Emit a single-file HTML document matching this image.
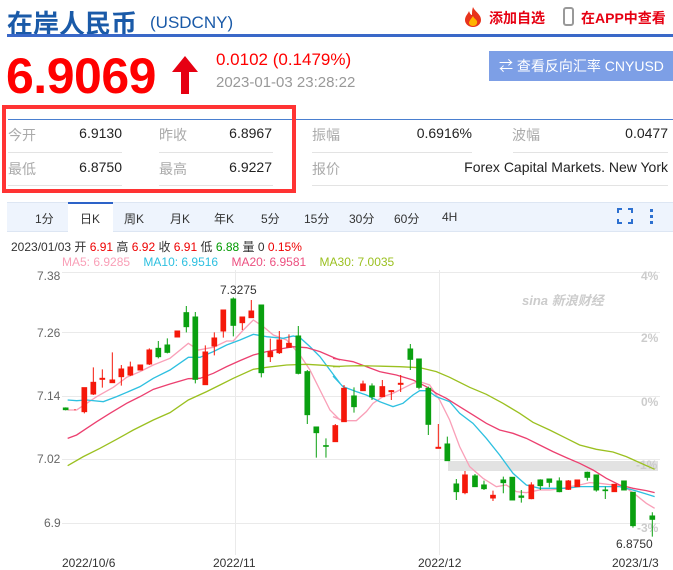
<!DOCTYPE html>
<html><head><meta charset="utf-8"><style>
*{margin:0;padding:0;box-sizing:border-box}
body{width:673px;height:570px;background:#fff;position:relative;overflow:hidden;font-family:"Liberation Sans","Noto Sans CJK SC",sans-serif}
.a{position:absolute;white-space:nowrap}
.lab{color:#aaa;font-size:14px}
.val{color:#222;font-size:14px;text-align:right}
.ln{position:absolute;height:1px;background:#e3e3e3}
.tab{position:absolute;top:210px;font-size:12px;color:#333}
</style></head><body>
<div class="a" style="left:7px;top:6px;font-size:26px;font-weight:bold;color:#1a5aa8;font-family:'Noto Sans CJK SC',sans-serif;line-height:34px">在岸人民币</div>
<div class="a" style="left:150px;top:11px;font-size:17px;color:#1a5aa8;line-height:24px">(USDCNY)</div>
<svg class="a" style="left:463px;top:6px" width="20" height="21" viewBox="0 0 20 21"><path d="M10 1C12 6 18 8 18 14A8 7 0 0 1 2 14C2 10 5 8 6 5C7 8 8 9 9 9C9 6 9 4 10 1Z" fill="#e8331c"/><path d="M10 10C11 13 15 14 14 17A4 3 0 0 1 6 17C6 15 8 13 10 10Z" fill="#ffb400"/></svg>
<div class="a" style="left:489px;top:8px;font-size:14px;font-weight:bold;color:#e60012;line-height:20px">添加自选</div>
<div class="a" style="left:563px;top:7px;width:11px;height:19px;border:2px solid #999;border-radius:3px"></div>
<div class="a" style="left:581px;top:8px;font-size:14px;font-weight:bold;color:#e60012;line-height:20px">在APP中查看</div>
<div class="a" style="left:7px;top:34px;width:666px;height:3px;background:#3a68c8"></div>
<div class="a" style="left:6px;top:48px;font-size:50px;font-weight:bold;color:#f00;line-height:56px;letter-spacing:-0.5px">6.9069</div>
<svg class="a" style="left:171px;top:55px" width="28" height="40" viewBox="0 0 28 40"><path d="M14 1L27 17H18V39H10V17H1Z" fill="#e60012"/></svg>
<div class="a" style="left:216px;top:49px;font-size:17px;color:#f00;line-height:22px">0.0102 (0.1479%)</div>
<div class="a" style="left:216px;top:73px;font-size:15px;color:#999;line-height:20px">2023-01-03 23:28:22</div>
<div class="a" style="left:489px;top:51px;width:184px;height:30px;background:#7d9fe6;color:#fff;font-size:14px;line-height:30px;padding-left:10px;overflow:hidden">⇄ 查看反向汇率 CNYUSD</div>
<div class="a" style="left:8px;top:119px;width:665px;height:1px;background:#4a7fd0"></div>
<div class="a" style="left:2px;top:105px;width:294px;height:88px;border:4px solid #f33"></div>
<div class="a lab" style="left:8px;top:125px">今开</div><div class="a val" style="left:60px;top:125px;width:62px">6.9130</div>
<div class="a lab" style="left:159px;top:125px">昨收</div><div class="a val" style="left:210px;top:125px;width:62px">6.8967</div>
<div class="ln" style="left:8px;top:152px;width:114px"></div><div class="ln" style="left:159px;top:152px;width:114px"></div>
<div class="a lab" style="left:8px;top:159px">最低</div><div class="a val" style="left:60px;top:159px;width:62px">6.8750</div>
<div class="a lab" style="left:159px;top:159px">最高</div><div class="a val" style="left:210px;top:159px;width:62px">6.9227</div>
<div class="ln" style="left:8px;top:185px;width:114px"></div><div class="ln" style="left:159px;top:185px;width:114px"></div>
<div class="a lab" style="left:312px;top:125px">振幅</div><div class="a val" style="left:380px;top:125px;width:92px">0.6916%</div>
<div class="a lab" style="left:512px;top:125px">波幅</div><div class="a val" style="left:580px;top:125px;width:88px">0.0477</div>
<div class="ln" style="left:312px;top:152px;width:160px"></div><div class="ln" style="left:513px;top:152px;width:155px"></div>
<div class="a lab" style="left:312px;top:159px">报价</div><div class="a val" style="left:400px;top:159px;width:268px">Forex Capital Markets. New York</div>
<div class="ln" style="left:312px;top:185px;width:356px"></div>
<div class="a" style="left:7px;top:202px;width:666px;height:30px;background:#eef4fd;border-top:1px solid #dde6f3;border-bottom:1px solid #dde6f3"></div>
<div class="a" style="left:68px;top:202px;width:45px;height:30px;background:#fff;border-top:2px solid #2d63c8"></div>
<div class="tab" style="left:35px">1分</div><div class="tab" style="left:80px">日K</div><div class="tab" style="left:124px">周K</div><div class="tab" style="left:170px">月K</div><div class="tab" style="left:214px">年K</div><div class="tab" style="left:261px">5分</div><div class="tab" style="left:304px">15分</div><div class="tab" style="left:349px">30分</div><div class="tab" style="left:394px">60分</div><div class="tab" style="left:442px">4H</div>
<svg class="a" style="left:617px;top:208px" width="40" height="16" viewBox="0 0 40 16"><path d="M1 5V1H5M11 1H15V5M15 11V15H11M5 15H1V11" fill="none" stroke="#2d70d0" stroke-width="2"/><rect x="33" y="1" width="3" height="3" fill="#2d70d0"/><rect x="33" y="7" width="3" height="3" fill="#2d70d0"/><rect x="33" y="13" width="3" height="3" fill="#2d70d0"/></svg>
<div class="a" style="left:11px;top:238px;font-size:12px;color:#333">2023/01/03 开 <span style="color:#e00">6.91</span> 高 <span style="color:#e00">6.92</span> 收 <span style="color:#e00">6.91</span> 低 <span style="color:#090">6.88</span> 量 0 <span style="color:#e00">0.15%</span></div>
<div class="a" style="left:62px;top:255px;font-size:12px"><span style="color:#f9a0b8">MA5: 6.9285</span>&nbsp;&nbsp;&nbsp;&nbsp;<span style="color:#2ec0e0">MA10: 6.9516</span>&nbsp;&nbsp;&nbsp;&nbsp;<span style="color:#ec5080">MA20: 6.9581</span>&nbsp;&nbsp;&nbsp;&nbsp;<span style="color:#9bc020">MA30: 7.0035</span></div>
<svg class="a" style="left:0;top:270px" width="673" height="300" viewBox="0 0 673 300">
<g stroke="#eaeaea" stroke-width="1"><line x1="62" y1="2.5" x2="660" y2="2.5"/><line x1="62" y1="62.5" x2="660" y2="62.5"/><line x1="62" y1="126.5" x2="660" y2="126.5"/><line x1="62" y1="189.5" x2="660" y2="189.5"/><line x1="62" y1="253.5" x2="660" y2="253.5"/><line x1="235.5" y1="0" x2="235.5" y2="285"/><line x1="439.5" y1="0" x2="439.5" y2="285"/></g>
<rect x="448" y="191" width="210" height="10" fill="#e2e2e2"/>
<g font-size="12" fill="#666"><text x="37" y="10">7.38</text><text x="37" y="67">7.26</text><text x="37" y="130">7.14</text><text x="37" y="193">7.02</text><text x="44" y="257">6.9</text></g>
<g font-size="12" fill="#ccc" font-weight="bold"><text x="641" y="10">4%</text><text x="641" y="72">2%</text><text x="641" y="136">0%</text><text x="636" y="199">-1%</text><text x="637" y="262">-3%</text></g>
<text x="522" y="35" font-size="13" fill="#ccc" font-style="italic" font-weight="bold">sina 新浪财经</text>
<g font-size="12" fill="#333"><text x="220" y="24">7.3275</text><text x="616" y="278">6.8750</text><text x="62" y="297">2022/10/6</text><text x="213" y="297">2022/11</text><text x="418" y="297">2022/12</text><text x="612" y="297">2023/1/3</text></g>
<g transform="scale(0.3333)" fill="none" stroke-width="4">
<polyline stroke="#f9a0b8" points="203,420 230,420 260,400 290,380 340,352 380,322 420,305 460,285 510,265 565,220 595,240 640,232 680,213 700,213 730,180 760,150 790,170 820,195 860,210 900,255 930,300 960,360 990,420 1020,450"/>
<polyline stroke="#2ec0e0" points="203,390 230,392 260,390 310,395 350,380 420,350 460,325 510,300 565,262 600,262 640,245 680,225 720,210 760,193 800,200 850,205 880,198 900,203 930,230 960,260 990,300 1020,340"/>
<polyline stroke="#ec4070" points="203,505 230,495 260,475 290,455 330,430 380,400 420,380 460,358 510,342 565,326 600,325 640,310 680,290 720,272 760,255 800,245 840,237 880,230 920,233 960,245 1000,262 1020,270"/>
<polyline stroke="#9bc020" points="203,587 250,560 300,535 350,508 400,480 460,450 510,428 565,390 620,365 660,345 700,325 760,298 800,292 860,285 920,283 970,286 1020,290"/>
</g>
<g transform="translate(333,0) scale(0.3333)" fill="none" stroke-width="4">
<polyline stroke="#f9a0b8" points="0,440 30,452 70,452 100,425 120,400 150,380 180,370 210,355 240,340 260,335 290,345 320,390 350,450 380,530 410,590 450,625 490,650 520,645 550,665 580,668 620,660 650,660 680,657 710,650 740,645 770,638 800,640 840,645 870,648 900,668 940,700 965,715"/>
<polyline stroke="#2ec0e0" points="0,318 30,350 70,365 100,375 140,395 180,410 210,400 240,375 260,362 285,362 310,380 350,395 380,430 420,460 460,505 500,555 540,610 580,645 620,655 660,655 700,655 740,650 780,650 820,650 860,650 900,660 940,672 965,680"/>
<polyline stroke="#ec4070" points="0,265 30,270 60,275 100,290 140,305 190,315 240,330 280,350 310,370 340,385 380,410 420,435 460,460 500,480 540,490 580,505 620,525 660,545 700,563 740,580 780,600 820,625 860,645 900,655 940,662 965,668"/>
<polyline stroke="#9bc020" points="0,290 40,288 80,287 120,288 200,290 260,293 310,305 350,322 410,352 460,373 510,400 560,430 600,457 650,480 700,505 740,525 790,538 840,546 880,560 920,578 965,598"/>
</g>
<g transform="scale(0.3333)" stroke-width="3">
<g fill="#f5180a" stroke="#f5180a">
<path d="M225 417V421M253 353V430M280 292V375M307 298V353M337 247V338M364 285V347M391 275V318M421 285V300M448 235V285M532 183V201M616 226V344M643 187V256M670 120V203M727 141V180M754 90V143M811 206V276M838 183V252M867 193V232M1006 462V515"/>
<rect x="246" y="353" width="14" height="72"/><rect x="273" y="337" width="14" height="35"/><rect x="300" y="325" width="14" height="3"/><rect x="330" y="330" width="14" height="8"/><rect x="357" y="297" width="14" height="23"/><rect x="384" y="291" width="14" height="24"/><rect x="414" y="285" width="14" height="15"/><rect x="441" y="240" width="14" height="42"/><rect x="525" y="183" width="14" height="18"/><rect x="609" y="246" width="14" height="98"/><rect x="636" y="204" width="14" height="24"/><rect x="663" y="120" width="14" height="63"/><rect x="720" y="141" width="14" height="17"/><rect x="747" y="123" width="14" height="20"/><rect x="804" y="245" width="14" height="15"/><rect x="831" y="210" width="14" height="38"/><rect x="860" y="220" width="14" height="12"/><rect x="999" y="467" width="14" height="48"/>
</g>
<g fill="#0aa010" stroke="#0aa010">
<path d="M197 412V421M475 213V265M502 205V250M559 108V187M586 126V340M700 82V199M784 105V322M895 168V313M922 300V462M949 471V563M978 505V563"/>
<rect x="190" y="414" width="14" height="5"/><rect x="468" y="235" width="14" height="25"/><rect x="495" y="225" width="14" height="22"/><rect x="552" y="128" width="14" height="42"/><rect x="579" y="141" width="14" height="187"/><rect x="693" y="87" width="14" height="79"/><rect x="777" y="105" width="14" height="203"/><rect x="888" y="198" width="14" height="112"/><rect x="915" y="305" width="14" height="129"/><rect x="942" y="471" width="14" height="17"/><rect x="971" y="527" width="14" height="2"/>
</g></g>
<g transform="translate(333,0) scale(0.3333)" stroke-width="3">
<g fill="#f5180a" stroke="#f5180a">
<path d="M33 345V455M90 332V362M148 330V380M175 360V390M203 315V366M316 462V534M396 603V673M480 662V693M595 637V688M706 630V660M733 630V650M844 643V665"/>
<rect x="26" y="355" width="14" height="100"/><rect x="83" y="342" width="14" height="20"/><rect x="141" y="350" width="14" height="30"/><rect x="168" y="362" width="14" height="3"/><rect x="196" y="340" width="14" height="3"/><rect x="309" y="532" width="14" height="3"/><rect x="389" y="615" width="14" height="53"/><rect x="473" y="676" width="14" height="8"/><rect x="588" y="645" width="14" height="41"/><rect x="699" y="633" width="14" height="25"/><rect x="726" y="630" width="14" height="20"/><rect x="837" y="643" width="14" height="22"/>
</g>
<g fill="#0aa010" stroke="#0aa010">
<path d="M63 352V428M117 340V390M232 222V300M258 267V358M286 350V495M343 500V572M370 627V690M426 612V650M453 632V660M511 620V670M538 622V690M565 660V698M622 628V660M649 627V652M679 622V667M763 605V632M790 615V665M817 650V687M873 633V660M900 667V773M958 727V800"/>
<rect x="56" y="378" width="14" height="32"/><rect x="110" y="348" width="14" height="32"/><rect x="225" y="237" width="14" height="31"/><rect x="251" y="267" width="14" height="85"/><rect x="279" y="355" width="14" height="108"/><rect x="336" y="522" width="14" height="50"/><rect x="363" y="642" width="14" height="23"/><rect x="419" y="618" width="14" height="32"/><rect x="446" y="645" width="14" height="11"/><rect x="504" y="630" width="14" height="8"/><rect x="531" y="622" width="14" height="68"/><rect x="558" y="678" width="14" height="4"/><rect x="615" y="630" width="14" height="17"/><rect x="642" y="627" width="14" height="10"/><rect x="672" y="633" width="14" height="32"/><rect x="756" y="607" width="14" height="15"/><rect x="783" y="615" width="14" height="45"/><rect x="810" y="660" width="14" height="2"/><rect x="866" y="633" width="14" height="27"/><rect x="893" y="667" width="14" height="100"/><rect x="951" y="738" width="14" height="10"/>
</g></g>
</svg>
</body></html>
